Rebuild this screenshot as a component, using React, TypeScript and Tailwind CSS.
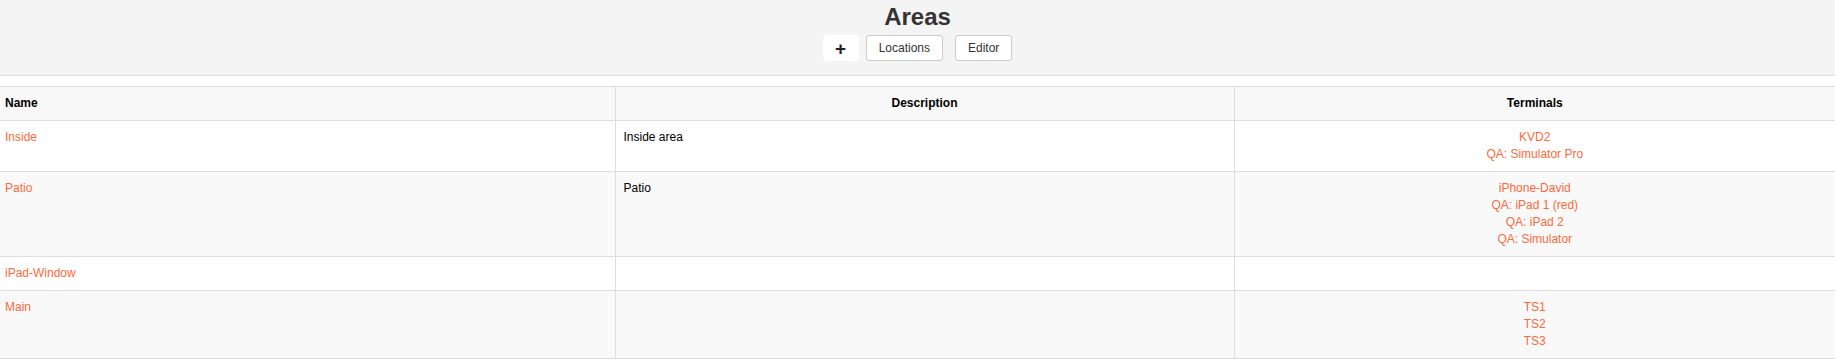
import React from 'react';

type Area = { name: string; description: string; terminals: string[] };

const areas: Area[] = [
    { name: 'Inside', description: 'Inside area', terminals: ['KVD2', 'QA: Simulator Pro'] },
    { name: 'Patio', description: 'Patio', terminals: ['iPhone-David', 'QA: iPad 1 (red)', 'QA: iPad 2', 'QA: Simulator'] },
    { name: 'iPad-Window', description: '', terminals: [] },
    { name: 'Main', description: '', terminals: ['TS1', 'TS2', 'TS3'] },
];

const App: React.FC = () => {
    return (
        <div className="min-h-screen bg-white text-[12px] leading-[17px] text-[#333] font-['Liberation_Sans',Arial,sans-serif]">
            <div className="bg-[#f4f4f4] border-b border-[#ddd] h-[76px] flex flex-col items-center">
                <h2 className="text-[24px] leading-[28px] font-bold text-[#333] mt-[3px]">Areas</h2>
                <div className="flex items-center mt-[4px]">
                    <button className="w-[36px] h-[26px] bg-white rounded-[4px] flex items-center justify-center text-[#222] text-[19px] font-bold leading-none">
                        +
                    </button>
                    <button className="ml-[7px] h-[26px] px-[12px] bg-white border border-[#ccc] rounded-[3px] text-[#333]">
                        Locations
                    </button>
                    <button className="ml-[12px] h-[26px] px-[12px] bg-white border border-[#ccc] rounded-[3px] text-[#333]">
                        Editor
                    </button>
                </div>
            </div>

            <table className="w-full mt-[10px] border-collapse table-fixed">
                <colgroup>
                    <col className="w-[615px]" />
                    <col className="w-[619px]" />
                    <col />
                </colgroup>
                <thead>
                    <tr className="bg-[#f8f8f8] h-[34px]">
                        <th className="border-y border-r border-[#ddd] text-left font-bold text-black px-[5px]">Name</th>
                        <th className="border border-[#ddd] text-center font-bold text-black px-2">Description</th>
                        <th className="border-y border-l border-[#ddd] text-center font-bold text-black px-2">Terminals</th>
                    </tr>
                </thead>
                <tbody>
                    {areas.map((a, i) => (
                        <tr key={a.name} className={i % 2 === 1 ? 'bg-[#f9f9f9]' : 'bg-white'}>
                            <td className="border-y border-r border-[#ddd] align-top px-[5px] py-[8px]">
                                <a className="text-[#ff6a3c]">{a.name}</a>
                            </td>
                            <td className="border border-[#ddd] align-top px-[8px] py-[8px] text-black">
                                {a.description || '\u00a0'}
                            </td>
                            <td className="border-y border-l border-[#ddd] align-top text-center px-2 py-[8px]">
                                {a.terminals.map(t => (
                                    <div key={t} className="text-[#ff6a3c]">{t}</div>
                                ))}
                            </td>
                        </tr>
                    ))}
                </tbody>
            </table>
        </div>
    );
};

export default App;
